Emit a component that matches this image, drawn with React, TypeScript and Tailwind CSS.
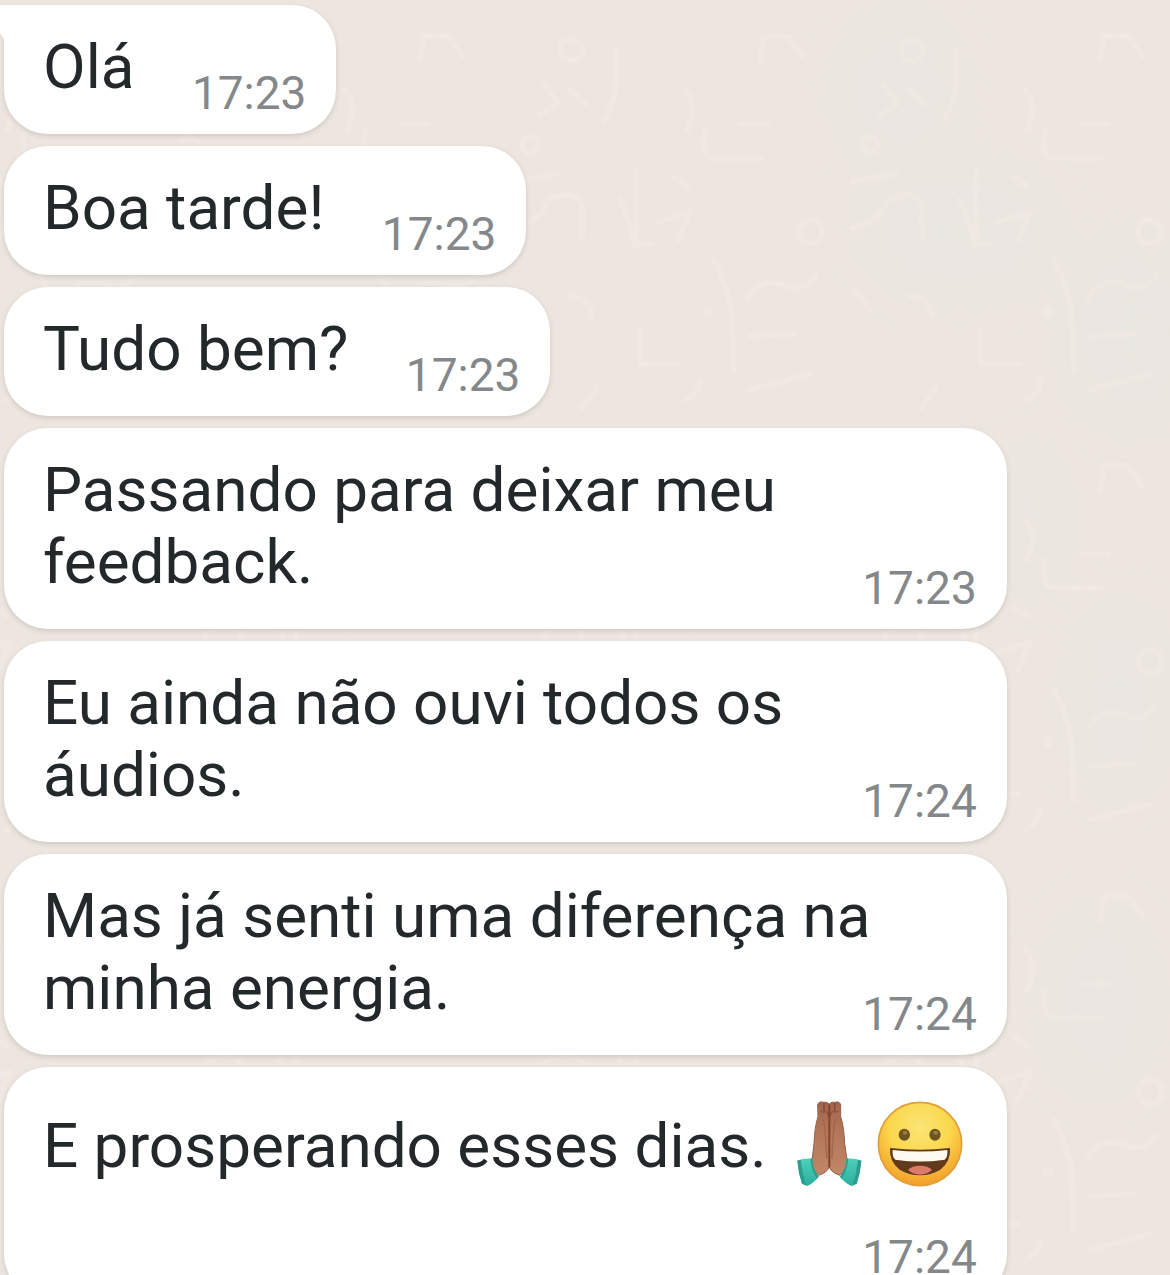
import React from "react";

type Message = {
  id: number;
  text: string;
  time: string;
  emojis?: boolean;
};

const messages: Message[] = [
  { id: 1, text: "Olá", time: "17:23" },
  { id: 2, text: "Boa tarde!", time: "17:23" },
  { id: 3, text: "Tudo bem?", time: "17:23" },
  { id: 4, text: "Passando para deixar meu feedback.", time: "17:23" },
  { id: 5, text: "Eu ainda não ouvi todos os áudios.", time: "17:24" },
  { id: 6, text: "Mas já senti uma diferença na minha energia.", time: "17:24" },
  { id: 7, text: "E prosperando esses dias.", time: "17:24", emojis: true },
];

const PrayingHands: React.FC = () => (
  <svg
    viewBox="18 63 258 258"
    role="img"
    aria-label="Mãos em oração"
    className="h-[86px] w-[86px]"
  >
    <defs>
      <linearGradient id="skin" x1="0" y1="0" x2="0" y2="1">
        <stop offset="0" stopColor="#a2664f" />
        <stop offset="0.4" stopColor="#b37659" />
        <stop offset="1" stopColor="#c08768" />
      </linearGradient>
      <linearGradient id="sleeve" x1="0" y1="0" x2="0" y2="1">
        <stop offset="0" stopColor="#4fd0b8" />
        <stop offset="1" stopColor="#2bae9e" />
      </linearGradient>
    </defs>
    <path
      d="M113 72 Q120 62 131 67 Q140 64 148 72 L148 262 Q139 279 116 286 L94 262 Q98 225 102 190 Q104 140 114 110 Z"
      fill="url(#skin)"
      stroke="#94604b"
      strokeWidth="3"
    />
    <path
      d="M182 72 Q175 62 164 67 Q156 64 148 72 L148 262 Q156 279 180 286 L204 262 Q199 225 194 190 Q192 140 182 110 Z"
      fill="url(#skin)"
      stroke="#94604b"
      strokeWidth="3"
    />
    <path d="M132 70 V94 M164 70 V94" stroke="#8c4936" strokeWidth="5" />
    <path d="M120 92 Q130 100 138 94 Q144 96 145 108 M176 92 Q166 100 158 94 Q152 96 151 108" stroke="#96503c" strokeWidth="4" fill="none" />
    <path d="M130 116 Q138 160 140 236 M166 116 Q158 160 156 236" stroke="#a4654c" strokeWidth="4" fill="none" />
    <path d="M148 74 V262" stroke="#84452f" strokeWidth="6" />
    <path
      d="M52 242 Q72 233 97 236 Q97 264 116 290 Q101 309 82 318 L66 311 Q55 279 52 242 Z"
      fill="url(#sleeve)"
    />
    <path
      d="M244 242 Q224 233 199 236 Q199 264 180 290 Q195 309 214 318 L230 311 Q241 279 244 242 Z"
      fill="url(#sleeve)"
    />
    <path d="M52 242 Q57 240 62 239 Q66 280 78 316 L66 311 Q55 279 52 242 Z" fill="#2a9d90" />
    <path d="M244 242 Q239 240 234 239 Q230 280 218 316 L230 311 Q241 279 244 242 Z" fill="#2a9d90" />
    <path d="M97 236 Q97 264 116 290 L111 296 Q93 270 91 235 Z" fill="#2a9d90" />
    <path d="M199 236 Q199 264 180 290 L185 296 Q203 270 205 235 Z" fill="#2a9d90" />
  </svg>
);

const Grinning: React.FC = () => (
  <svg
    viewBox="291 63 258 258"
    role="img"
    aria-label="Rosto sorridente"
    className="h-[86px] w-[86px]"
  >
    <defs>
      <radialGradient id="face" cx="0.5" cy="0.3" r="0.72">
        <stop offset="0" stopColor="#fbe577" />
        <stop offset="0.5" stopColor="#fbd84d" />
        <stop offset="1" stopColor="#f29a27" />
      </radialGradient>
    </defs>
    <circle cx="420" cy="192" r="125" fill="url(#face)" stroke="#dfa03b" strokeWidth="5" />
    <ellipse cx="373" cy="164" rx="17" ry="18" fill="#6f5423" />
    <ellipse cx="465" cy="164" rx="17" ry="18" fill="#6f5423" />
    <ellipse cx="375" cy="158" rx="7" ry="6" fill="#9b7e3f" />
    <ellipse cx="467" cy="158" rx="7" ry="6" fill="#9b7e3f" />
    <path
      d="M330 204 Q420 214 510 204 Q513 245 481 269 Q453 286 420 286 Q387 286 359 269 Q327 245 330 204 Z"
      fill="#61391b"
    />
    <path d="M338 210 Q420 219 502 210 Q504 231 494 239 Q420 250 346 239 Q336 231 338 210 Z" fill="#fffaf0" />
    <path d="M384 270 Q395 257 420 257 Q445 257 456 270 Q440 284 420 284 Q400 284 384 270 Z" fill="#df796b" />
  </svg>
);

// Faint doodles behind the conversation
const Wallpaper: React.FC = () => (
  <svg aria-hidden="true" className="absolute inset-0 h-full w-full">
    <defs>
      <filter id="soft" x="-50%" y="-50%" width="200%" height="200%">
        <feGaussianBlur stdDeviation="24" />
      </filter>
      <pattern id="doodles" width="340" height="430" x="-170" patternUnits="userSpaceOnUse">
        <g fill="none" stroke="#f3e9e4" strokeWidth="6" strokeLinecap="round" strokeLinejoin="round">
          <path d="M50 45 q12 -12 24 4 q-4 16 -20 10 z" />
          <path d="M106 50 v28 q-2 28 -12 42" />
          <path d="M34 85 l14 18 l-18 12 M60 90 l16 14" />
          <path d="M175 90 q14 14 2 40 M195 130 q-6 30 14 28 h42" />
          <path d="M232 124 h26 M250 60 l4 -24 h24 l14 20" />
          <path d="M0 182 l46 -8 M0 228 q30 -4 38 -28 q26 -12 34 4 v34" />
          <path d="M126 170 v74 M110 200 q10 20 14 44 h16" />
          <path d="M165 178 l12 8 M148 222 l32 -10 l-12 28" />
          <path d="M204 260 q18 34 18 62 l2 48" />
          <path d="M238 300 q8 -22 34 -16 q20 10 34 -8 M240 336 l44 -2 M240 390 l60 -16" />
          <path d="M130 330 v34 h38 M20 310 l-14 -18 M60 296 q20 2 22 20" />
          <path d="M86 388 l-14 20 M176 400 q14 -8 14 -20" />
          <circle cx="300" cy="232" r="12" />
          <circle cx="198" cy="312" r="3" />
          <circle cx="20" cy="145" r="8" />
        </g>
      </pattern>
    </defs>
    <g fill="#e9e6e1" filter="url(#soft)" opacity="0.7">
      <ellipse cx="900" cy="90" rx="55" ry="70" />
      <ellipse cx="960" cy="230" rx="90" ry="60" />
      <ellipse cx="1130" cy="330" rx="60" ry="90" />
      <ellipse cx="1120" cy="700" rx="40" ry="90" />
      <ellipse cx="1030" cy="520" rx="25" ry="70" />
      <ellipse cx="1100" cy="1000" rx="45" ry="90" />
    </g>
    <rect width="100%" height="100%" fill="url(#doodles)" opacity="0.5" />
  </svg>
);

const Bubble: React.FC<{ message: Message; first: boolean }> = ({ message, first }) => (
  <li
    className={`relative w-fit max-w-[86%] bg-white pt-[26px] pr-8 pb-[31px] pl-[39px] shadow-[0_2px_5px_rgba(80,85,70,0.2)] ${
      first ? "rounded-[44px] rounded-tl-none" : "rounded-[44px]"
    }`}
  >
    {/* Tail */}
    {first && (
      <svg viewBox="0 0 4 34" aria-hidden="true" className="absolute top-0 right-full h-[34px] w-1">
        <path d="M0 0 H4 V34 L0 28 Z" fill="#fff" />
      </svg>
    )}
    <p className="text-[62px] leading-[72px] text-[#23282b]">
      {message.text}
      {message.emojis && (
        <>
          {" "}
          <span className="mt-2 mb-2 ml-1 inline-flex gap-[5px] align-[-20px]">
            <PrayingHands />
            <Grinning />
          </span>
        </>
      )}
      {/* Keeps room for the time at the end of the last line */}
      <span className="inline-block h-px w-[170px]"></span>
    </p>
    <time className="absolute right-[30px] bottom-3.5 text-[46px] leading-[54px] text-[#84888b]">
      {message.time}
    </time>
  </li>
);

const App: React.FC = () => {
  return (
    <main className="relative h-screen overflow-hidden bg-[#ede6e0] font-['Roboto',sans-serif]">
      <Wallpaper />
      <ul className="relative flex flex-col gap-3 pt-[5px] pl-1">
        {messages.map((message, index) => (
          <Bubble key={message.id} message={message} first={index === 0} />
        ))}
      </ul>
    </main>
  );
};

export default App;
